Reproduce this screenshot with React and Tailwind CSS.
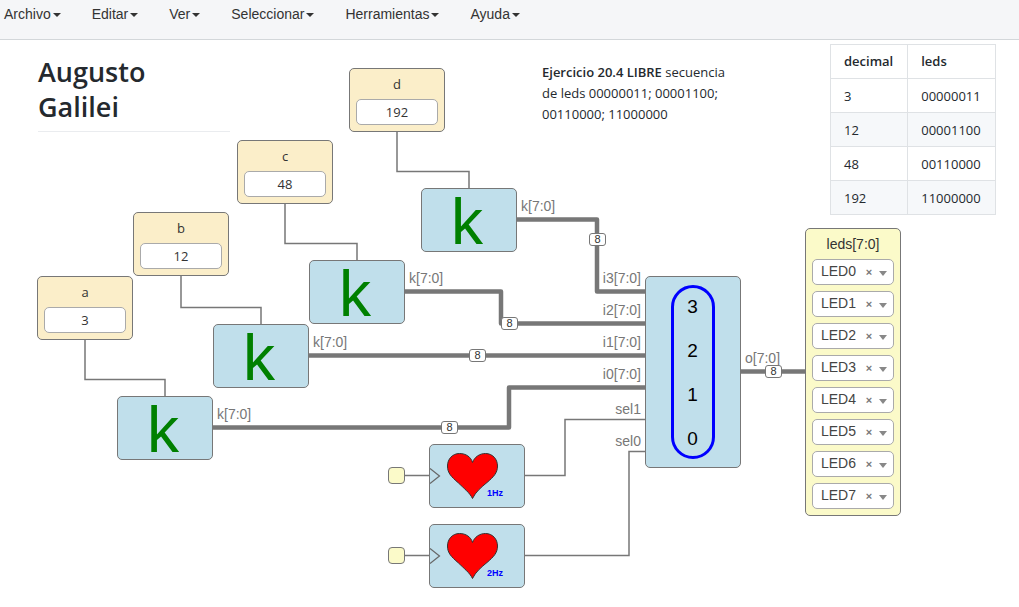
import React from "react";

const menus = ["Archivo", "Editar", "Ver", "Seleccionar", "Herramientas", "Ayuda"];

const constants = [
  { name: "a", value: "3", place: "left-[37px] top-[236px]" },
  { name: "b", value: "12", place: "left-[133px] top-[172px]" },
  { name: "c", value: "48", place: "left-[237px] top-[100px]" },
  { name: "d", value: "192", place: "left-[349px] top-[28px]" },
];

const constantBlocks = [
  { id: "ka", place: "left-[117px] top-[356px]" },
  { id: "kb", place: "left-[213px] top-[284px]" },
  { id: "kc", place: "left-[309px] top-[220px]" },
  { id: "kd", place: "left-[421px] top-[148px]" },
];

const hearts = [
  { freq: "1Hz", place: "left-[429px] top-[404px]", clock: "left-[388px] top-[427px]" },
  { freq: "2Hz", place: "left-[429px] top-[484px]", clock: "left-[388px] top-[507px]" },
];

const portLabels = [
  { text: "k[7:0]", place: "left-[521px] top-[156px]" },
  { text: "k[7:0]", place: "left-[409px] top-[228px]" },
  { text: "k[7:0]", place: "left-[313px] top-[292px]" },
  { text: "k[7:0]", place: "left-[217px] top-[364px]" },
  { text: "i3[7:0]", place: "left-[581px] top-[228px] w-15 text-right" },
  { text: "i2[7:0]", place: "left-[581px] top-[260px] w-15 text-right" },
  { text: "i1[7:0]", place: "left-[581px] top-[292px] w-15 text-right" },
  { text: "i0[7:0]", place: "left-[581px] top-[324px] w-15 text-right" },
  { text: "sel1", place: "left-[581px] top-[359px] w-15 text-right" },
  { text: "sel0", place: "left-[581px] top-[391px] w-15 text-right" },
  { text: "o[7:0]", place: "left-[745px] top-[308px]" },
];

const badges = [
  "left-[589px] top-[193px]",
  "left-[501px] top-[277px]",
  "left-[469px] top-[309px]",
  "left-[441px] top-[381px]",
  "left-[765px] top-[325px]",
];

const thinWires = [
  "M85 300V339.5H165V356",
  "M181 236V267.5H261V284",
  "M285 164V203.5H357V220",
  "M397 92V131.5H469V148",
  "M405 435.5H429",
  "M405 515.5H429",
  "M525 435.5H565V379.5H645",
  "M525 515.5H629V411.5H645",
];

const buses = [
  "M517 179.5H597V251.5H645",
  "M405 251.5H501V283.5H645",
  "M309 315.5H645",
  "M213 387.5H509V347.5H645",
  "M741 331.5H805",
];

const rows = [
  ["3", "00000011"],
  ["12", "00001100"],
  ["48", "00110000"],
  ["192", "11000000"],
];

const leds = ["LED0", "LED1", "LED2", "LED3", "LED4", "LED5", "LED6", "LED7"];

function MenuBar() {
  return (
    <nav className="flex h-10 items-start gap-[31px] border-b border-[#d3d7da] bg-[#f5f6f8] px-1 pt-1">
      {menus.map((m) => (
        <button key={m} type="button" className="flex items-center gap-0.5 text-sm text-[#333]">
          {m}
          <svg width="8" height="4" viewBox="0 0 8 4" className="mt-0.5" aria-hidden="true">
            <path d="M0 0H8L4 4Z" fill="#333" />
          </svg>
        </button>
      ))}
    </nav>
  );
}

function Wires() {
  return (
    <svg className="absolute inset-0 h-full w-full" fill="none" stroke="#777" aria-hidden="true">
      {thinWires.map((d) => (
        <path key={d} d={d} strokeWidth="1.5" />
      ))}
      {buses.map((d) => (
        <path key={d} d={d} strokeWidth="4.5" strokeLinejoin="round" />
      ))}
    </svg>
  );
}

function ConstantInput({ name, value, place }) {
  return (
    <div
      className={`absolute flex h-16 w-24 flex-col rounded-[5px] border border-[#777] bg-[#fbeec9] px-1.5 font-['Open_Sans',sans-serif] text-[13px] text-[#333] ${place}`}
    >
      <label htmlFor={`const-${name}`} className="h-[30px] text-center leading-[30px]">
        {name}
      </label>
      <input
        id={`const-${name}`}
        defaultValue={value}
        className="h-[26px] w-full rounded-[5px] border border-[#aaa] bg-white text-center"
      />
    </div>
  );
}

function HeartBlock({ freq, place }) {
  return (
    <div className={`absolute h-16 w-24 rounded-[5px] border border-[#777] bg-[#c0dfeb] ${place}`}>
      <svg width="94" height="62" viewBox="0 0 94 62">
        <path d="M0 23.5L9.5 31L0 38.5" fill="none" stroke="#666" strokeWidth="1.2" />
        <path
          d="M42.5 53.5C40 48 33 42.500 28.500 38C21 31.500 17.500 28 17.500 21C17.500 14 22.500 8.500 29.500 8.500C36 8.500 41 12 42.500 17.500C44.500 12 49.500 8.500 55.500 8.500C62.500 8.500 67.500 14 67.500 21C67.500 28 63.500 32 57 37.500C51.500 42 45.500 47 42.500 53.500Z"
          fill="#f00"
          stroke="#333"
          strokeWidth="1"
        />
        <text x="57" y="51" fill="#00f" fontSize="9" fontWeight="bold">
          {freq}
        </text>
      </svg>
    </div>
  );
}

function Mux() {
  return (
    <div className="absolute top-[236px] left-[645px] h-48 w-24 rounded-[5px] border border-[#777] bg-[#c0dfeb]">
      <svg width="94" height="190" viewBox="0 0 94 190">
        <rect x="26.500" y="9.500" width="41" height="171" rx="20.500" fill="none" stroke="#00f" strokeWidth="3" />
        <g fontSize="19" textAnchor="middle" fill="#000">
          <text x="46.500" y="36">3</text>
          <text x="46.500" y="80">2</text>
          <text x="46.500" y="124">1</text>
          <text x="46.500" y="168">0</text>
        </g>
      </svg>
    </div>
  );
}

function LedSelect({ led }) {
  return (
    <div className="relative">
      <select
        aria-label={`Pin ${led}`}
        defaultValue={led}
        className="block h-[26px] w-full appearance-none rounded-[5px] border border-[#aaa] bg-white pb-0.5 pl-2 text-sm leading-[22px] text-[#444]"
      >
        {leds.map((l) => (
          <option key={l}>{l}</option>
        ))}
      </select>
      <button
        type="button"
        aria-label={`Quitar ${led}`}
        className="absolute top-[5px] right-[19px] w-3 text-center text-[11px] leading-4 font-bold text-[#777]"
      >
        ×
      </button>
      <svg width="8" height="5" viewBox="0 0 8 5" className="pointer-events-none absolute top-3 right-[7px]">
        <path d="M0 0H8L4 5Z" fill="#888" />
      </svg>
    </div>
  );
}

export default function App() {
  return (
    <div className="min-h-screen bg-white font-['Liberation_Sans',Arial,sans-serif]">
      <MenuBar />
      <main className="relative min-h-[567px] overflow-hidden">
        <Wires />

        <h1 className="absolute top-[14px] left-[38px] w-48 border-b border-[#eaecef] pb-[7px] font-['Open_Sans',sans-serif] text-[27px] leading-[35px] font-semibold text-[#24292e]">
          Augusto
          <br />
          Galilei
        </h1>

        <p className="absolute top-[22px] left-[542px] w-48 font-['Open_Sans',sans-serif] text-[13px] leading-[21px] text-[#24292e]">
          <strong className="font-semibold">Ejercicio 20.4 LIBRE</strong> secuencia de leds 00000011; 00001100;
          00110000; 11000000
        </p>

        <table className="absolute top-1 left-[830px] border-collapse font-['Open_Sans',sans-serif] text-[13px] leading-[21px] text-[#24292e]">
          <thead>
            <tr>
              <th className="border border-[#dfe2e5] py-1.5 pr-3.5 pl-[13px] text-left font-semibold">decimal</th>
              <th className="border border-[#dfe2e5] py-1.5 pr-3.5 pl-[13px] text-left font-semibold">leds</th>
            </tr>
          </thead>
          <tbody>
            {rows.map(([dec, bits]) => (
              <tr key={dec} className="even:bg-[#f6f8fa]">
                <td className="border border-[#dfe2e5] pt-[7px] pr-3.5 pb-[5px] pl-[13px]">{dec}</td>
                <td className="border border-[#dfe2e5] pt-[7px] pr-3.5 pb-[5px] pl-[13px]">{bits}</td>
              </tr>
            ))}
          </tbody>
        </table>

        {constants.map((c) => (
          <ConstantInput key={c.name} {...c} />
        ))}

        {constantBlocks.map((b) => (
          <div
            key={b.id}
            className={`absolute flex h-16 w-24 items-center justify-center rounded-[5px] border border-[#777] bg-[#c0dfeb] pt-1 pr-1 text-[64px] leading-none text-[#008000] ${b.place}`}
          >
            k
          </div>
        ))}

        {hearts.map((h) => (
          <React.Fragment key={h.freq}>
            <div className={`absolute size-[17px] rounded-[4px] border border-[#777] bg-[#fbfac9] ${h.clock}`} />
            <HeartBlock freq={h.freq} place={h.place} />
          </React.Fragment>
        ))}

        <Mux />

        {portLabels.map((p) => (
          <span key={p.place} className={`absolute text-sm text-[#777] ${p.place}`}>
            {p.text}
          </span>
        ))}

        {badges.map((place) => (
          <span
            key={place}
            className={`absolute flex h-[13px] w-[17px] items-center justify-center rounded-[3px] border border-[#777] bg-white text-[11px] leading-none text-[#333] ${place}`}
          >
            8
          </span>
        ))}

        <section className="absolute top-[188px] left-[805px] flex w-24 flex-col gap-1.5 rounded-[5px] border border-[#777] bg-[#fbfac9] px-1.5 pb-1.5">
          <h2 className="-mb-1.5 h-[30px] text-center text-sm leading-[30px] text-[#333]">leds[7:0]</h2>
          {leds.map((l) => (
            <LedSelect key={l} led={l} />
          ))}
        </section>
      </main>
    </div>
  );
}
